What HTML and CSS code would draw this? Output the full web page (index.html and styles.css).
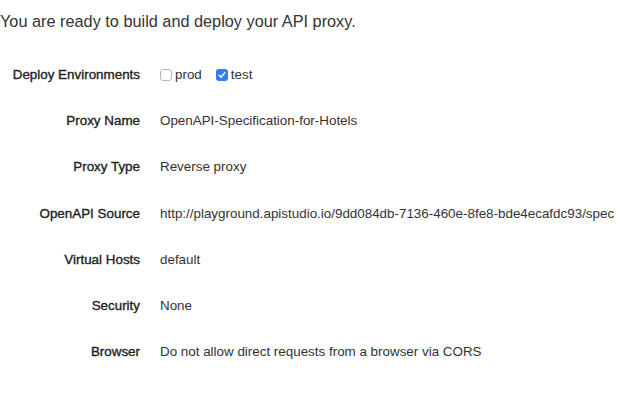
FILE: index.html
```html
<!DOCTYPE html>
<html>
<head>
<meta charset="utf-8">
<link rel="stylesheet" href="styles.css">
</head>
<body>
<div class="page">
  <p class="intro">You are ready to build and deploy your API proxy.</p>
  <div class="summary">
    <div class="label">Deploy Environments</div>
    <div class="value envs">
      <span class="env"><span class="box"></span>prod</span>
      <span class="env"><span class="box checked"><svg viewBox="0 0 12 12" width="12" height="12"><path d="M3.2 6.3 L5.1 8.3 L8.9 3.6" fill="none" stroke="#fff" stroke-width="1.4" stroke-linecap="round" stroke-linejoin="round"/></svg></span>test</span>
    </div>
    <div class="label">Proxy Name</div>
    <div class="value">OpenAPI-Specification-for-Hotels</div>
    <div class="label">Proxy Type</div>
    <div class="value">Reverse proxy</div>
    <div class="label">OpenAPI Source</div>
    <div class="value">http://playground.apistudio.io/9dd084db-7136-460e-8fe8-bde4ecafdc93/spec</div>
    <div class="label">Virtual Hosts</div>
    <div class="value">default</div>
    <div class="label">Security</div>
    <div class="value">None</div>
    <div class="label">Browser</div>
    <div class="value">Do not allow direct requests from a browser via CORS</div>
  </div>
</div>
</body>
</html>
```

FILE: styles.css
```css
html, body {
  margin: 0;
  padding: 0;
  background: #fff;
}
body {
  font-family: "Liberation Sans", Arial, Helvetica, sans-serif;
  color: #333;
}
.page {
  padding-top: 11px;
}
.intro {
  margin: 0;
  font-size: 16.3px;
  line-height: 20px;
  color: #333;
}
.summary {
  margin-top: 21px;
  display: grid;
  grid-template-columns: 140px 1fr;
  column-gap: 20px;
  font-size: 13.4px;
  line-height: 20px;
}
.label, .value {
  padding: 13px 0;
  height: 20.2px;
  white-space: nowrap;
}
.label {
  text-align: right;
  color: #222;
  -webkit-text-stroke: 0.35px #222;
}
.envs {
  display: flex;
  align-items: center;
  gap: 14px;
}
.env {
  display: inline-flex;
  align-items: center;
  gap: 3px;
}
.box {
  display: inline-block;
  width: 12px;
  height: 12px;
  box-sizing: border-box;
  border: 1px solid #b5b5b5;
  border-radius: 3px;
  background: #fff;
}
.box.checked {
  border: none;
  background: #2f7ef6;
}
.box svg {
  display: block;
}
```
